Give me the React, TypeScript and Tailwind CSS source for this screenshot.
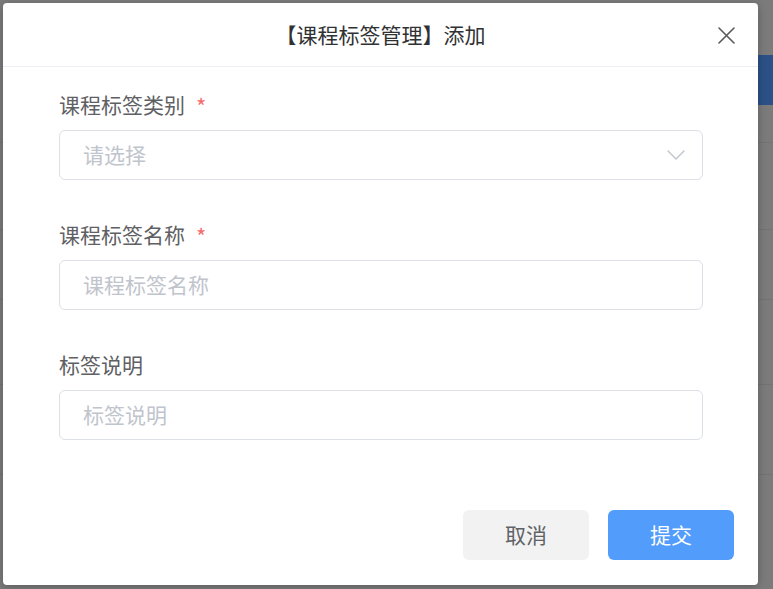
import React from 'react';

const font = { fontFamily: '"Noto Sans CJK SC", "Noto Sans", sans-serif' };

interface FieldProps {
  label: string;
  placeholder: string;
  required?: boolean;
  select?: boolean;
}

const ChevronDown = () => (
  <svg width="18" height="10" viewBox="0 0 18 10" fill="none">
    <path d="M1 1l8 8 8-8" stroke="#c0c4cc" strokeWidth="1.4" strokeLinecap="round" strokeLinejoin="round" />
  </svg>
);

const CloseIcon = () => (
  <svg width="17" height="17" viewBox="0 0 17 17" fill="none">
    <path d="M1 1l15 15M16 1L1 16" stroke="#5a5a5a" strokeWidth="1.6" strokeLinecap="round" />
  </svg>
);

const Field: React.FC<FieldProps> = ({ label, placeholder, required, select }) => (
  <div className="mb-[35px]">
    <div className="flex h-[40px] items-center text-[21px] text-[#5f6064]">
      {label}
      {required && <span className="ml-[11px] text-[22px] text-[#f56c6c]">*</span>}
    </div>
    <div className="mt-[5px] flex h-[50px] items-center justify-between rounded-[6px] border border-[#dcdfe6] bg-white pl-[23px] pr-[17px]">
      <span className="text-[21px] text-[#c0c4cc]">{placeholder}</span>
      {select && <ChevronDown />}
    </div>
  </div>
);

export default function App() {
  return (
    <div className="relative h-[589px] w-full overflow-hidden bg-[#7b7b7b]" style={font}>
      {/* page under the mask */}
      <div className="flex h-full flex-col">
        <div className="h-[55px]" />
        <div className="flex h-[50px] justify-end">
          <div className="w-[18px] bg-[#2b5187]" />
        </div>
        <div className="h-[38px] border-b border-[#737373]" />
        <div className="h-[87px] border-b border-[#737373]" />
        <div className="h-[70px] border-b border-[#737373]" />
        <div className="h-[85px] border-b border-[#737373]" />
        <div className="h-[90px] border-b border-[#737373]" />
      </div>

      {/* dialog */}
      <div className="absolute left-[3px] top-[3px] flex h-[582px] w-[755px] flex-col rounded-[4px] bg-white shadow-[0_2px_8px_rgba(0,0,0,0.25)]">
        <div className="relative flex h-[64px] shrink-0 items-center justify-center border-b border-[#ebeef5]">
          <span className="text-[21px] text-[#303133]">【课程标签管理】添加</span>
          <button className="absolute right-[23px] top-[24px]">
            <CloseIcon />
          </button>
        </div>

        <div className="flex-1 pl-[56px] pr-[55px] pt-[18px]">
          <Field label="课程标签类别" placeholder="请选择" required select />
          <Field label="课程标签名称" placeholder="课程标签名称" required />
          <Field label="标签说明" placeholder="标签说明" />
        </div>

        <div className="flex shrink-0 justify-end gap-[19px] pb-[25px] pr-[24px]">
          <button className="h-[50px] w-[126px] rounded-[6px] bg-[#f2f2f2] text-[21px] text-[#606266]">取消</button>
          <button className="h-[50px] w-[126px] rounded-[6px] bg-[#529cfb] text-[21px] text-white">提交</button>
        </div>
      </div>
    </div>
  );
}
